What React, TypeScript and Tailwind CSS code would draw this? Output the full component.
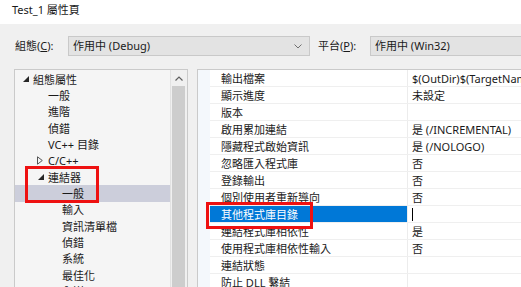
import React from "react";

const treeItems = [
  { label: "組態屬性", level: 0, toggle: "open" },
  { label: "一般", level: 1 },
  { label: "進階", level: 1 },
  { label: "偵錯", level: 1 },
  { label: "VC++ 目錄", level: 1 },
  { label: "C/C++", level: 1, toggle: "closed" },
  { label: "連結器", level: 1, toggle: "open" },
  { label: "一般", level: 2, selected: true },
  { label: "輸入", level: 2 },
  { label: "資訊清單檔", level: 2 },
  { label: "偵錯", level: 2 },
  { label: "系統", level: 2 },
  { label: "最佳化", level: 2 },
  { label: "內嵌 IDL", level: 2 },
];

const levelPad = ["pl-[7px]", "pl-[22px]", "pl-[36px]"];

const props = [
  { name: "輸出檔案", value: "$(OutDir)$(TargetName)$(TargetExt)" },
  { name: "顯示進度", value: "未設定" },
  { name: "版本", value: "" },
  { name: "啟用累加連結", value: "是 (/INCREMENTAL)" },
  { name: "隱藏程式啟始資訊", value: "是 (/NOLOGO)" },
  { name: "忽略匯入程式庫", value: "否" },
  { name: "登錄輸出", value: "否" },
  { name: "個別使用者重新導向", value: "否" },
  { name: "其他程式庫目錄", value: "", active: true },
  { name: "連結程式庫相依性", value: "是" },
  { name: "使用程式庫相依性輸入", value: "否" },
  { name: "連結狀態", value: "" },
  { name: "防止 DLL 繫結", value: "" },
];

function Chevron() {
  return (
    <svg width="8" height="5" viewBox="0 0 8 5" className="shrink-0">
      <polyline points="0.5,0.5 4,4 7.5,0.5" fill="none" stroke="#707070" strokeWidth="1" />
    </svg>
  );
}

function Combo({ text, width }: { text: string; width: string }) {
  return (
    <div className={`${width} h-5 shrink-0 flex items-center justify-between pl-[4px] pr-[7px] bg-[#e3e3e3] border border-[#c9c9c9]`}>
      <span>{text}</span>
      <Chevron />
    </div>
  );
}

function Toggle({ kind }: { kind?: string }) {
  if (kind === "open") {
    return (
      <svg width="6" height="6" viewBox="0 0 6 6" className="ml-[1px]">
        <path d="M6 0 L6 6 L0 6 Z" fill="#262626" />
      </svg>
    );
  }
  if (kind === "closed") {
    return (
      <svg width="6" height="9" viewBox="0 0 6 9">
        <path d="M0.5 0.8 L5.3 4.5 L0.5 8.2 Z" fill="none" stroke="#555" strokeWidth="1" />
      </svg>
    );
  }
  return null;
}

export default function App() {
  return (
    <div className="relative w-[521px] h-[287px] overflow-hidden bg-[#f0f0f0] text-[11px] text-[#1a1a1a] font-['Noto_Sans','Noto_Sans_CJK_TC',sans-serif]">
      <div className="h-6 bg-white pl-3 pt-[2px] leading-[16px]">Test_1 屬性頁</div>

      <div className="flex items-center mt-3 h-5">
        <span className="ml-[15px] w-[53px] shrink-0">
          組態(<u>C</u>):
        </span>
        <Combo text="作用中 (Debug)" width="w-[242px]" />
        <span className="ml-[8px] w-[52px] shrink-0">
          平台(<u>P</u>):
        </span>
        <Combo text="作用中 (Win32)" width="w-[220px]" />
      </div>

      <div className="flex mt-[13px] ml-[14px] gap-[9px]">
        {/* tree */}
        <div className="w-[174px] h-[240px] shrink-0 flex border border-[#cacaca] bg-[#f5f5f5]">
          <div className="flex-1 pt-[1px]">
            {treeItems.map((it, i) => (
              <div
                key={i}
                className={`h-[16.33px] flex items-center ${levelPad[it.level]} ${it.selected ? "bg-[#cccedb]" : ""}`}
              >
                <span className="w-[11px] shrink-0 flex items-center">
                  <Toggle kind={it.toggle} />
                </span>
                <span className="leading-none">{it.label}</span>
              </div>
            ))}
          </div>
          <div className="w-[17px] shrink-0 flex flex-col border-l border-[#e2e2e2] bg-[#f0f0f0]">
            <div className="h-[16px] flex items-center justify-center">
              <svg width="8" height="5" viewBox="0 0 8 5">
                <polyline points="0.5,4.5 4,1 7.5,4.5" fill="none" stroke="#606060" strokeWidth="1.2" />
              </svg>
            </div>
            <div className="flex-1 ml-[1px] mr-[2px] bg-[#cdcdcd]" />
          </div>
        </div>

        {/* property grid */}
        <div className="w-[400px] h-[240px] shrink-0 flex border border-[#cacaca] bg-white">
          <div className="w-[12px] shrink-0 bg-[#f4f8fc]" />
          <div className="flex-1">
            {props.map((p, i) => (
              <div key={i} className="h-[17px] flex border-b border-[#efefef]">
                <div
                  className={`w-[198px] shrink-0 flex items-center pl-[11px] border-r border-[#ececec] ${p.active ? "bg-[#0078d7] text-white" : ""}`}
                >
                  <span className="leading-none whitespace-nowrap">{p.name}</span>
                </div>
                <div className="flex-1 flex items-center pl-[4px] whitespace-nowrap overflow-hidden">
                  {p.active ? <span className="w-px h-[13px] bg-black" /> : <span className="leading-none">{p.value}</span>}
                </div>
              </div>
            ))}
          </div>
        </div>
      </div>

      {/* annotation boxes */}
      <div className="absolute left-[25px] top-[166px] w-[74px] h-[37px] border-[3px] border-[#ee1111]" />
      <div className="absolute left-[206px] top-[202px] w-[107px] h-[27px] border-[3px] border-[#ee1111]" />
    </div>
  );
}
